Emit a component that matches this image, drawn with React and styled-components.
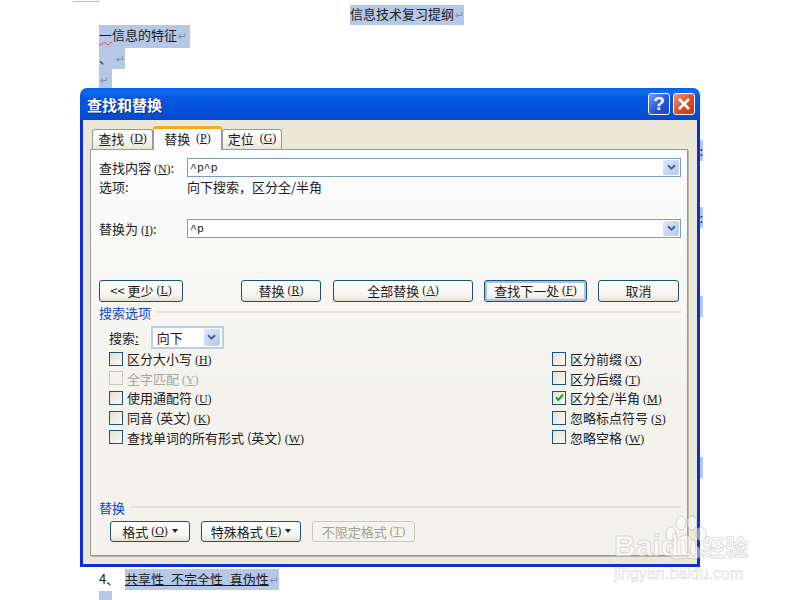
import React from "react";
import styled, { createGlobalStyle } from "styled-components";

const Hint = ({ k }) => (
  <HintText>
    (<u>{k}</u>)
  </HintText>
);

const Chevron = () => (
  <svg width="9" height="7" viewBox="0 0 9 7">
    <path d="M1 1.2 L4.5 4.7 L8 1.2" fill="none" stroke="#4d6185" strokeWidth="2" />
  </svg>
);

const DropButton = () => (
  <DropBox>
    <Chevron />
  </DropBox>
);

const Option = ({ label, k, disabled, checked }) => (
  <OptionRow $disabled={disabled}>
    <CheckBox $disabled={disabled}>
      {checked && (
        <svg width="9" height="9" viewBox="0 0 9 9">
          <path d="M1 4.5 L3.4 7 L8 1.5" fill="none" stroke="#21a121" strokeWidth="2" />
        </svg>
      )}
    </CheckBox>
    <span>
      {label} <Hint k={k} />
    </span>
  </OptionRow>
);

const Arrow = () => <ReturnMark>↵</ReturnMark>;

export default function App() {
  return (
    <Page>
      <GlobalStyle />
      <CornerMark />
      <DocColumn>
        <TitleLine>
          <Sel>
            信息技术复习提纲
            <Arrow />
          </Sel>
        </TitleLine>
        <DocLine $h={23}>
          <Sel $w={91}>
            <Squiggle>一</Squiggle>信息的特征
            <Arrow />
          </Sel>
        </DocLine>
        <DocLine $h={21}>
          <Sel $w={26}>
            、 <Arrow />
          </Sel>
        </DocLine>
        <DocLine $h={21}>
          <Sel $w={13}>
            <Arrow />
          </Sel>
        </DocLine>
        <Sliver $gap={50}>:</Sliver>
        <Sliver $gap={46}>:</Sliver>
        <Sliver $gap={68} />
        <Sliver $gap={140} />
        <BottomLine>
          <ListNumber>4、</ListNumber>
          <Sel>
            <Underlined>共享性 不完全性 真伪性</Underlined>
            <Arrow />
          </Sel>
        </BottomLine>
        <DocLine $h={9}>
          <Sel $w={13} />
        </DocLine>
      </DocColumn>

      <Dialog>
        <TitleBar>
          <TitleText>查找和替换</TitleText>
          <CaptionButtons>
            <HelpButton>?</HelpButton>
            <CloseButton>
              <svg width="14" height="14" viewBox="0 0 14 14">
                <path d="M2 2 L12 12 M12 2 L2 12" stroke="#fff" strokeWidth="2.6" />
              </svg>
            </CloseButton>
          </CaptionButtons>
        </TitleBar>
        <DialogBody>
          <Tabs>
            <Tab $w={61}>
              查找 <Hint k="D" />
            </Tab>
            <ActiveTab>
              替换 <Hint k="P" />
            </ActiveTab>
            <Tab $w={60}>
              定位 <Hint k="G" />
            </Tab>
          </Tabs>
          <Panel>
            <FieldRow>
              <FieldLabel>
                查找内容 <Hint k="N" />:
              </FieldLabel>
              <Combo>
                <ComboText>^p^p</ComboText>
                <DropButton />
              </Combo>
            </FieldRow>
            <InfoRow>
              <FieldLabel>选项:</FieldLabel>
              <span>向下搜索，区分全/半角</span>
            </InfoRow>
            <FieldRow $top={24}>
              <FieldLabel>
                替换为 <Hint k="I" />:
              </FieldLabel>
              <Combo>
                <ComboText>^p</ComboText>
                <DropButton />
              </Combo>
            </FieldRow>

            <ButtonRow>
              <Button $w={84}>
                &lt;&lt; 更少 <Hint k="L" />
              </Button>
              <Button $w={80} $left={58}>
                替换 <Hint k="R" />
              </Button>
              <Button $w={140} $left={12}>
                全部替换 <Hint k="A" />
              </Button>
              <Button $w={103} $left={11} $default>
                查找下一处 <Hint k="F" />
              </Button>
              <Button $w={81} $left={11}>
                取消
              </Button>
            </ButtonRow>

            <SectionHeader>
              <SectionTitle>搜索选项</SectionTitle>
              <SectionRule />
            </SectionHeader>
            <SearchRow>
              <span>
                搜索<u>:</u>
              </span>
              <Select>
                <span>向下</span>
                <DropButton />
              </Select>
            </SearchRow>
            <OptionColumns>
              <OptionList $w={443}>
                <Option label="区分大小写" k="H" />
                <Option label="全字匹配" k="Y" disabled />
                <Option label="使用通配符" k="U" />
                <Option label="同音 (英文)" k="K" />
                <Option label="查找单词的所有形式 (英文)" k="W" />
              </OptionList>
              <OptionList>
                <Option label="区分前缀" k="X" />
                <Option label="区分后缀" k="T" />
                <Option label="区分全/半角" k="M" checked />
                <Option label="忽略标点符号" k="S" />
                <Option label="忽略空格" k="W" />
              </OptionList>
            </OptionColumns>

            <SectionHeader $bottom>
              <SectionTitle>替换</SectionTitle>
              <SectionRule />
            </SectionHeader>
            <FormatRow>
              <Button $w={80} $h={21}>
                格式 <Hint k="O" /> <Caret />
              </Button>
              <Button $w={100} $h={21}>
                特殊格式 <Hint k="E" /> <Caret />
              </Button>
              <Button $w={103} $h={21} $disabled>
                不限定格式 <Hint k="T" />
              </Button>
            </FormatRow>
          </Panel>
        </DialogBody>
      </Dialog>

      <Watermark>
        <PawMark width="44" height="48" viewBox="0 0 44 48">
          <g fill="rgba(255,255,255,.5)" stroke="rgba(170,170,170,.5)" strokeWidth="1">
            <ellipse cx="8" cy="19" rx="5" ry="7" />
            <ellipse cx="18" cy="8" rx="5" ry="7" />
            <ellipse cx="29" cy="8" rx="5" ry="7" />
            <ellipse cx="38" cy="19" rx="5" ry="7" />
            <path d="M22 20 C15 20 15 28 9 32 C3 37 7 45 14 44 C18 43 26 43 30 44 C38 45 41 37 35 32 C29 28 29 20 22 20 Z" />
          </g>
        </PawMark>
        <BrandRow>
          <BrandLatin>Bai</BrandLatin>
          <BrandLatin>du</BrandLatin>
          <BrandCjk>经验</BrandCjk>
        </BrandRow>
        <BrandUrl>jingyan.baidu.com</BrandUrl>
      </Watermark>
    </Page>
  );
}

const GlobalStyle = createGlobalStyle`
  html, body {
    margin: 0;
    background: #fff;
  }
  body {
    font-family: "Noto Sans CJK SC", "Liberation Sans", sans-serif;
    font-size: 13px;
    color: #1c1c1c;
  }
`;

const Page = styled.div`
  position: relative;
  width: 800px;
  height: 600px;
  overflow: hidden;
  background: #fff;
`;

const CornerMark = styled.div`
  position: absolute;
  left: 73px;
  top: -1px;
  width: 25px;
  height: 2px;
  border: solid #bdbdbd;
  border-width: 0 1px 1px 0;
`;

const DocColumn = styled.div`
  margin-left: 99px;
  width: 616px;
  line-height: 20px;
`;

const TitleLine = styled.div`
  padding-top: 5px;
  height: 20px;
  line-height: 17px;
  text-align: center;
`;

const DocLine = styled.div`
  height: ${(p) => p.$h}px;
`;

const Sel = styled.span`
  display: inline-block;
  height: 100%;
  min-height: 9px;
  width: ${(p) => (p.$w ? `${p.$w}px` : "auto")};
  background: #b5c8e8;
  white-space: nowrap;
  vertical-align: top;
`;

const Squiggle = styled.span`
  text-decoration: underline wavy #d8474f 1px;
`;

const Underlined = styled.u`
  word-spacing: 4px;
`;

const ReturnMark = styled.span`
  color: #7f8ea8;
  font-family: "DejaVu Sans", sans-serif;
  font-size: 11px;
  margin-left: 1px;
`;

const Sliver = styled.div`
  margin-top: ${(p) => p.$gap}px;
  width: 604px;
  height: 21px;
  background: #b5c8e8;
  text-align: right;
  line-height: 21px;
`;

const BottomLine = styled.div`
  display: flex;
  height: 21px;
  margin-top: 91px;
  margin-bottom: 1px;
`;

const ListNumber = styled.span`
  width: 26px;
`;

const Dialog = styled.div`
  position: absolute;
  left: 80px;
  top: 88px;
  width: 620px;
  height: 479px;
  display: flex;
  flex-direction: column;
`;

const TitleBar = styled.div`
  height: 32px;
  flex: none;
  display: flex;
  align-items: center;
  justify-content: space-between;
  padding: 0 5px 0 7px;
  border-radius: 7px 7px 0 0;
  background: linear-gradient(#0a5fe6 0%, #0a6cf2 12%, #0558e2 30%, #0451db 75%, #0a47c8 100%);
`;

const TitleText = styled.div`
  color: #fff;
  font-size: 15px;
  font-weight: 700;
  text-shadow: 1px 1px 1px #0a2a80;
`;

const CaptionButtons = styled.div`
  display: flex;
  gap: 3px;
`;

const CaptionButton = styled.div`
  width: 22px;
  height: 22px;
  box-sizing: border-box;
  display: flex;
  align-items: center;
  justify-content: center;
  border: 1px solid #fff;
  border-radius: 3px;
  color: #fff;
`;

const HelpButton = styled(CaptionButton)`
  background: linear-gradient(135deg, #6f9cf0, #2353d6 60%, #1f46c0);
  font: 700 19px "Liberation Sans", sans-serif;
`;

const CloseButton = styled(CaptionButton)`
  background: linear-gradient(135deg, #ec9878, #d94d20 55%, #c23a14);
`;

const DialogBody = styled.div`
  flex: 1;
  min-height: 0;
  display: flex;
  flex-direction: column;
  padding: 6px 9px 8px 7px;
  background: #ebe8d8;
  border: solid #0a2fd4;
  border-width: 0 3px 3px;
`;

const Tabs = styled.div`
  display: flex;
  align-items: flex-end;
  height: 23px;
  flex: none;
  padding-left: 2px;
`;

const Tab = styled.div`
  box-sizing: border-box;
  width: ${(p) => p.$w}px;
  height: 20px;
  padding-bottom: 2px;
  display: flex;
  align-items: center;
  justify-content: center;
  gap: 3px;
  white-space: pre;
  border: 1px solid #919b9c;
  border-bottom: 0;
  border-radius: 3px 3px 0 0;
  background: linear-gradient(#fff, #f3f2ea 70%, #e6e4d8);
`;

const ActiveTab = styled(Tab)`
  width: 69px;
  height: 24px;
  position: relative;
  z-index: 1;
  margin-bottom: -1px;
  background: #fcfcfe;
  border-top: 3px solid #f6a821;
`;

const Panel = styled.div`
  flex: 1;
  min-height: 0;
  display: flex;
  flex-direction: column;
  padding: 8px 6px 13px 8px;
  border: 1px solid #919b9c;
  background: linear-gradient(#fdfdff, #f3f2ec 60%);
  box-shadow: 1px 1px 0 #b7b7ac;
`;

const FieldRow = styled.div`
  display: flex;
  align-items: center;
  height: 19px;
  flex: none;
  margin-top: ${(p) => p.$top || 0}px;
`;

const InfoRow = styled.div`
  display: flex;
  align-items: center;
  height: 18px;
  flex: none;
`;

const FieldLabel = styled.div`
  width: 88px;
  flex: none;
  white-space: pre;
`;

const Combo = styled.div`
  flex: 1;
  box-sizing: border-box;
  height: 19px;
  display: flex;
  align-items: center;
  justify-content: space-between;
  padding: 0 1px 0 2px;
  background: #fff;
  border: 1px solid #7f9db9;
`;

const ComboText = styled.span`
  font-family: "Liberation Mono", monospace;
  font-size: 11.5px;
`;

const DropBox = styled.div`
  width: 16px;
  height: 15px;
  display: flex;
  align-items: center;
  justify-content: center;
  border-radius: 2px;
  background: linear-gradient(135deg, #dde7fb, #b4c8f3);
`;

const ButtonRow = styled.div`
  display: flex;
  flex: none;
  margin-top: 42px;
`;

const Button = styled.div`
  box-sizing: border-box;
  flex: none;
  width: ${(p) => p.$w}px;
  height: ${(p) => p.$h || 22}px;
  margin-left: ${(p) => p.$left || 0}px;
  padding-bottom: 1px;
  display: flex;
  align-items: center;
  justify-content: center;
  white-space: pre;
  border: 1px solid ${(p) => (p.$disabled ? "#c9c7ba" : "#1c4f7c")};
  border-radius: 3px;
  color: ${(p) => (p.$disabled ? "#a1a192" : "inherit")};
  background: ${(p) =>
    p.$disabled ? "#f3f2ec" : "linear-gradient(#fff, #f6f5ef 70%, #e3e0d5)"};
  box-shadow: ${(p) => (p.$default ? "inset 0 0 0 2px #a9c2ea" : "none")};
`;

const HintText = styled.span`
  font-family: "Liberation Serif", serif;
  font-size: 12px;
`;

const Caret = styled.i`
  display: inline-block;
  margin-left: 4px;
  border: solid transparent;
  border-width: 4px 3.5px 0;
  border-top-color: #222;
`;

const SectionHeader = styled.div`
  display: flex;
  align-items: center;
  flex: none;
  height: 18px;
  margin-top: ${(p) => (p.$bottom ? "auto" : "1px")};
  margin-bottom: ${(p) => (p.$bottom ? "5px" : "0")};
`;

const SectionTitle = styled.span`
  color: #0a47d1;
  margin-right: 6px;
`;

const SectionRule = styled.div`
  flex: 1;
  height: 2px;
  background: #e3e0d3;
`;

const SearchRow = styled.div`
  display: flex;
  align-items: center;
  flex: none;
  gap: 12px;
  margin-top: 5px;
  padding-left: 10px;
`;

const Select = styled.div`
  box-sizing: border-box;
  width: 73px;
  height: 23px;
  display: flex;
  align-items: center;
  justify-content: space-between;
  padding: 0 2px 0 4px;
  background: #fff;
  border: 2px solid #bccee8;
  & > div {
    height: 17px;
  }
`;

const OptionColumns = styled.div`
  display: flex;
  flex: none;
  padding-left: 10px;
`;

const OptionList = styled.div`
  width: ${(p) => (p.$w ? `${p.$w}px` : "auto")};
`;

const OptionRow = styled.div`
  height: 19.6px;
  display: flex;
  align-items: center;
  gap: 4px;
  white-space: pre;
  color: ${(p) => (p.$disabled ? "#a9a898" : "inherit")};
`;

const CheckBox = styled.div`
  box-sizing: border-box;
  width: 14px;
  height: 14px;
  display: flex;
  align-items: center;
  justify-content: center;
  border: 1px solid ${(p) => (p.$disabled ? "#c9c7ba" : "#1c5180")};
  background: ${(p) =>
    p.$disabled ? "#f3f2ec" : "linear-gradient(135deg, #e0dfd6, #fbfbf8)"};
`;

const FormatRow = styled.div`
  display: flex;
  flex: none;
  gap: 11px;
  padding-left: 11px;
`;

const Watermark = styled.div`
  position: absolute;
  left: 614px;
  top: 515px;
  width: 145px;
  height: 68px;
`;

const PawMark = styled.svg`
  position: absolute;
  left: 49px;
  top: 0;
`;

const BrandRow = styled.div`
  position: absolute;
  top: 14px;
  left: 0;
  display: flex;
  align-items: baseline;
  line-height: 34px;
`;

const BrandLatin = styled.span`
  font: 700 30px/34px "Liberation Sans", sans-serif;
  color: rgba(255, 255, 255, 0.6);
  -webkit-text-stroke: 1px rgba(170, 170, 170, 0.4);
`;

const BrandCjk = styled.span`
  margin-left: 5px;
  font-size: 23px;
  font-weight: 700;
  color: rgba(255, 255, 255, 0.6);
  -webkit-text-stroke: 1px rgba(170, 170, 170, 0.4);
`;

const BrandUrl = styled.div`
  position: absolute;
  top: 50px;
  left: 0;
  font: 400 16px/18px "Liberation Sans", sans-serif;
  color: rgba(255, 255, 255, 0.6);
  -webkit-text-stroke: 0.6px rgba(170, 170, 170, 0.45);
`;
